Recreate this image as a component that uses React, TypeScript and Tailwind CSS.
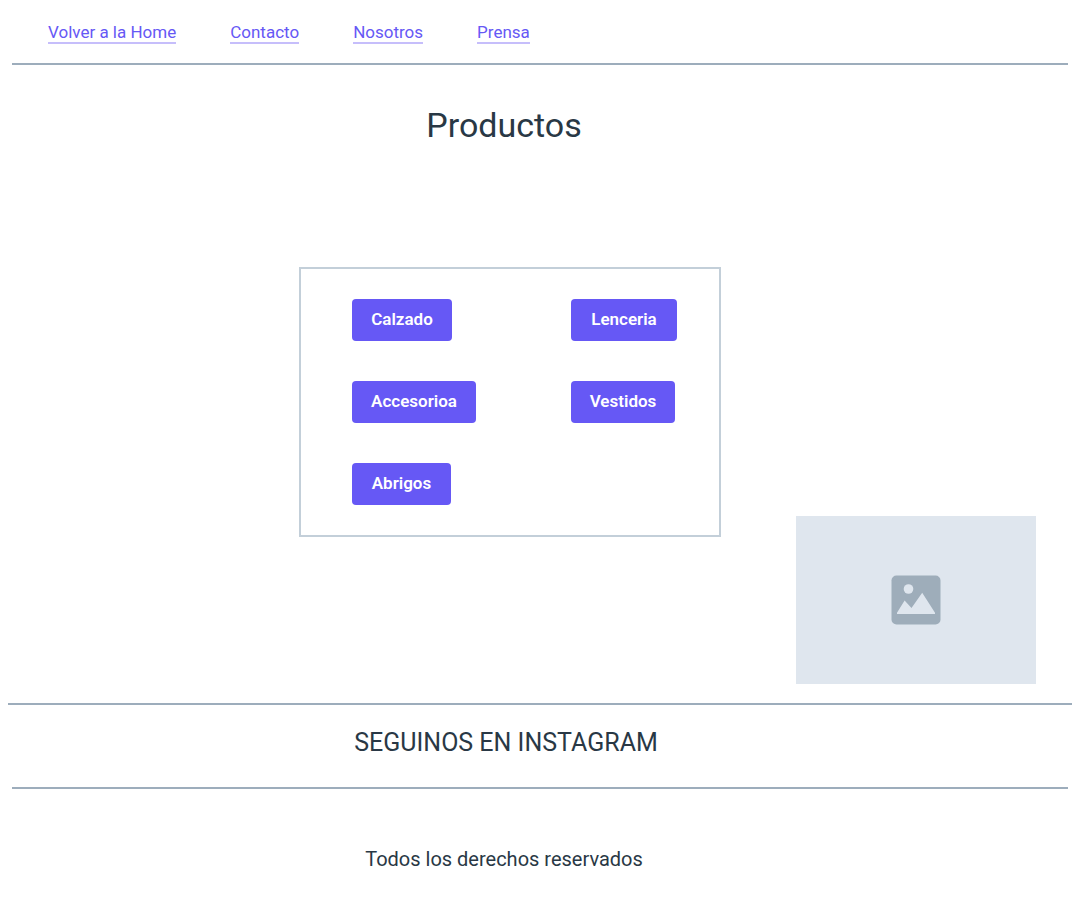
const links = ['Volver a la Home', 'Contacto', 'Nosotros', 'Prensa'];

const categories = [
  { label: 'Calzado', width: 'w-[100px]' },
  { label: 'Lenceria', width: 'w-[106px]' },
  { label: 'Accesorioa', width: 'w-[124px]' },
  { label: 'Vestidos', width: 'w-[104px]' },
  { label: 'Abrigos', width: 'w-[99px]' },
];

function ImagePlaceholder() {
  return (
    <div
      role="img"
      aria-label="Imagen"
      className="flex h-[168px] w-60 shrink-0 items-center justify-center self-end bg-[#dfe6ee]"
    >
      <svg className="h-[50px] w-[50px]" viewBox="0 0 50 50" aria-hidden="true">
        <rect x="0.5" y="0.5" width="49" height="49" rx="5" fill="#9eadba" />
        <circle cx="17.5" cy="14" r="4.8" fill="#dfe6ee" />
        <path d="M6 39v-1.2L13.6 25.5 20.5 33 31.2 17.8 44 37.8V39Z" fill="#dfe6ee" />
      </svg>
    </div>
  );
}

export default function App() {
  return (
    <div className="min-h-screen bg-white font-['Roboto',sans-serif] text-[#293845]">
      <header className="mx-3 border-b-2 border-[#9dadbc] pt-[22px] pb-[19px] pl-9">
        <nav className="flex flex-wrap gap-x-[54px] gap-y-3">
          {links.map((label) => (
            <a
              key={label}
              href="#"
              className="border-b-2 border-[#c6befb] text-[17px] leading-5 text-[#6658f5]"
            >
              {label}
            </a>
          ))}
        </nav>
      </header>

      <main>
        <h1 className="pt-[38px] pr-[72px] text-center text-[34px] leading-11">Productos</h1>
        <div className="mt-[120px] flex min-h-[417px] pr-11">
          <div className="flex flex-1 items-start justify-center pl-56">
            <section
              aria-label="Categorías"
              className="grid grid-cols-[219px_1fr] justify-items-start gap-y-10 border-2 border-[#c3cfd9] py-[30px] pr-[42px] pl-[51px]"
            >
              {categories.map(({ label, width }) => (
                <button
                  key={label}
                  type="button"
                  className={`${width} h-[42px] cursor-pointer rounded bg-[#6658f5] text-[17px] font-semibold text-white`}
                >
                  {label}
                </button>
              ))}
            </section>
          </div>
          <ImagePlaceholder />
        </div>
      </main>

      <section className="mx-2 mt-[19px] border-t-2 border-[#9dadbc] pt-5 pr-[68px] text-center">
        <h2 className="text-[25px] leading-9">SEGUINOS EN INSTAGRAM</h2>
      </section>
      <footer className="mx-3 mt-[26px] border-t-2 border-[#9dadbc] pt-14 pr-[72px] pb-10 text-center">
        <p className="text-xl leading-7">Todos los derechos reservados</p>
      </footer>
    </div>
  );
}
